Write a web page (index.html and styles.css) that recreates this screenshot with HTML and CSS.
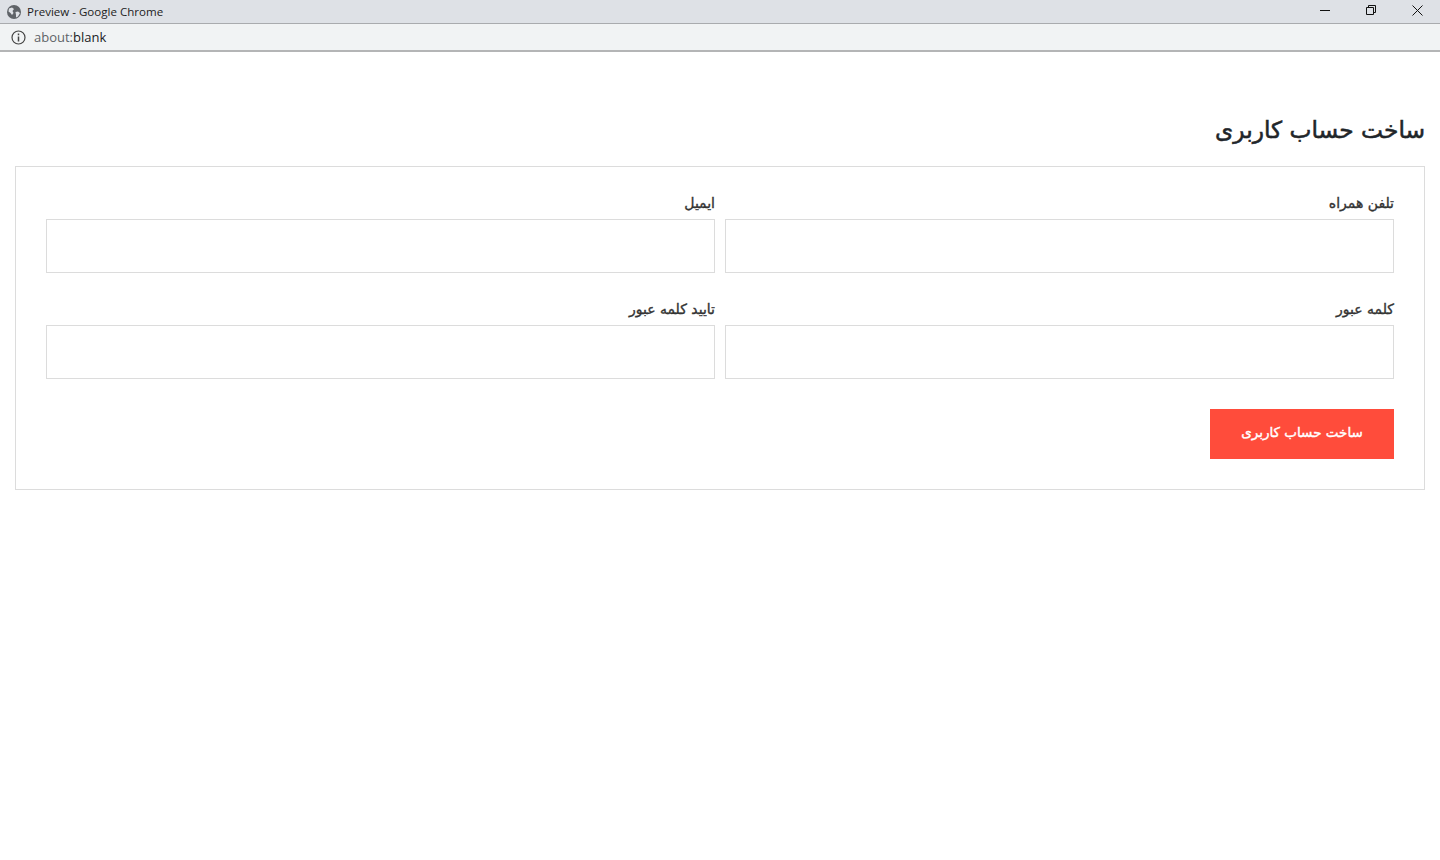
FILE: index.html
```html
<!DOCTYPE html>
<html lang="fa">
<head>
<meta charset="utf-8">
<title>Preview</title>
<link rel="stylesheet" href="styles.css">
</head>
<body>
<header class="chrome">
  <div class="titlebar">
    <svg class="globe" width="14" height="14" viewBox="0 0 14 14"><circle cx="7" cy="7" r="7" fill="#5f6368"/><path d="M2 3.500 5 2.500 7 4 5.500 6 6.500 8 5 10 3.500 8 1.500 6.500ZM8.500 7 11 6.500 13 8 11 11.500 9 12.500 9 10Z" fill="#dee1e6"/></svg>
    <span class="title">Preview - Google Chrome</span>
    <div class="winbtns">
      <svg width="10" height="10" viewBox="0 0 10 10"><path d="M0 5.500H10" stroke="#111" fill="none"/></svg>
      <svg width="10" height="10" viewBox="0 0 10 10"><path d="M.5 2.500H7.500V9.500H.5ZM2.500 2.500V.5H9.500V7.500H7.500" stroke="#111" fill="none"/></svg>
      <svg width="11" height="11" viewBox="0 0 11 11"><path d="M.5 .5 10.500 10.500M10.500 .5 .5 10.500" stroke="#111" fill="none"/></svg>
    </div>
  </div>
  <div class="addressbar">
    <svg width="15" height="15" viewBox="0 0 15 15"><circle cx="7.500" cy="7.500" r="6.500" stroke="#444" stroke-width="1.200" fill="none"/><path d="M7.500 6.500V11.500M7.500 3.500V5.200" stroke="#444" stroke-width="1.500"/></svg>
    <span class="url"><span class="scheme">about:</span>blank</span>
  </div>
</header>
<main class="page" dir="rtl">
  <h1 class="heading">ساخت حساب کاربری</h1>
  <form class="card">
    <div class="grid">
      <div class="field"><label class="label">تلفن همراه</label><input class="input" type="text"></div>
      <div class="field"><label class="label">ایمیل</label><input class="input" type="text"></div>
      <div class="field"><label class="label">کلمه عبور</label><input class="input" type="password"></div>
      <div class="field"><label class="label">تایید کلمه عبور</label><input class="input" type="password"></div>
    </div>
    <button class="submit" type="button">ساخت حساب کاربری</button>
  </form>
</main>
</body>
</html>
```
FILE: styles.css
```css
* { box-sizing: border-box; }
html, body { margin: 0; height: 100%; overflow: hidden; background: #fff; }
body { font-family: "DejaVu Sans", sans-serif; color: #212529; }
.chrome { height: 52px; font-family: "Open Sans", "Liberation Sans", sans-serif; }
.titlebar {
  height: 24px; background: #dee1e6; border-bottom: 1px solid #a9abae;
  display: flex; align-items: center; padding-left: 7px; font-size: 11.550px; color: #222;
}
.title { margin-left: 6px; padding-bottom: 1px; }
.winbtns { margin-left: auto; display: flex; align-items: center; gap: 36px; padding: 0 17px 3px 0; }
.addressbar {
  height: 28px; background: #f1f3f4; border-bottom: 2px solid #b4b5b6;
  display: flex; align-items: center; padding-left: 11px; font-size: 13px; color: #202124;
}
.url { margin-left: 8px; }
.scheme { color: #5f6368; }
.page { padding: 0 15px; }
.heading { margin: 62px 0 20px; font-size: 23.300px; line-height: 32px; font-weight: 400; -webkit-text-stroke: .55px #212529; }
.card { border: 1px solid #dcdcdc; padding: 30px; display: flex; flex-direction: column; align-items: flex-start; }
.grid { width: 100%; display: grid; grid-template-columns: 1fr 1fr; column-gap: 10px; row-gap: 30px; margin-bottom: 30px; }
.field { display: flex; flex-direction: column; gap: 10px; }
.label { font-size: 14px; line-height: 12px; font-weight: 400; color: #333; -webkit-text-stroke: .35px #333; }
.input { height: 54px; border: 1px solid #dcdcdc; background: #fff; outline: 0; }
.submit {
  width: 184px; height: 50px; border: 0; padding-bottom: 5px; background: #ff4c3b; color: #fff;
  font: 400 13.500px "DejaVu Sans", sans-serif; -webkit-text-stroke: .4px #fff;
}
```
